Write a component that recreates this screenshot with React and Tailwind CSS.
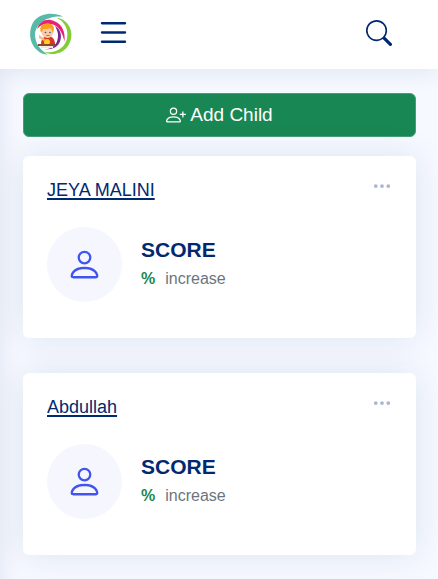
import { BsList, BsPerson, BsPersonPlus, BsSearch, BsThreeDots } from "react-icons/bs";

const children = [
  { id: 1, name: "JEYA MALINI" },
  { id: 2, name: "Abdullah" },
];

function Logo() {
  return (
    <svg viewBox="0 0 42 42" className="size-[42px]" role="img" aria-label="Home">
      <path d="M33 3.500C24-1 11 -.5 4 8C-2 17-1 30 7 37c3 3 6.500 4.500 11 4.800C10 37 5 30 5 21.500C5.500 11 16 2.500 33 3.500Z" fill="#57b9a8" />
      <path d="M27 5c5 2.500 9 7 10 12.500c1.500 9-2 16-9 19.500c-5 2.500-11 3-16 1c9 5.500 19 3 24.500-3c6-7 6.500-17 1.500-23.500C35 7.500 31 5 27 5Z" fill="#84cc37" />
      <path d="M7 16C10 7 18 5 25 8.500c7 3 10.500 10 9.500 20C32.500 20 29 13.500 23 11.500c-6-2-12-.5-16 4.500Z" fill="#ea1f78" />
      <path d="M25 13c5 3 7 8 5.500 14c-1.500 6-7 10-16.500 9.500c7-.5 11-3 13-8c2-6 1-10-2-15.500Z" fill="#7b278b" />
      <path d="M11 31c0-5 3-8 7-8s7 3 7 8Z" fill="#d9362b" />
      <path d="m9 22 6 4-1 2-5-3Z" fill="#f5b68d" />
      <circle cx="17.500" cy="19" r="6" fill="#fbc9a4" />
      <path d="M11 19.500C8.500 13 13 10 18 10.500c5 0 7.500 4 5 9c-1-2.500-2-3.500-3-4.500c-2 1-5 1-7 1c0 1-.5 2-2 3.500Z" fill="#f8a019" />
      <circle cx="15.500" cy="19.500" r=".8" fill="#315a86" />
      <circle cx="20" cy="19.500" r=".8" fill="#315a86" />
      <path d="M16.500 22.500h3" stroke="#b64a3c" strokeWidth=".8" />
      <circle cx="17" cy="29" r="3" fill="#ffd21c" />
      <path d="M8 31h18v2H8Z" fill="#8c4a2b" />
      <path d="M11 33h12v2H11Z" fill="#f3e8e0" />
    </svg>
  );
}

function Header() {
  return (
    <header className="relative z-10 flex h-[69px] items-center bg-white pl-[30px] pr-[46px] shadow-[0_2px_24px_rgba(1,41,112,0.1)]">
      <a href="#home" className="mb-px">
        <Logo />
      </a>
      <button type="button" aria-label="Toggle menu" className="ml-[23px] mb-1">
        <BsList className="size-[37px]" />
      </button>
      <button type="button" aria-label="Search" className="ml-auto mb-1">
        <BsSearch className="size-[26px]" />
      </button>
    </header>
  );
}

function ChildCard({ name }) {
  return (
    <article className="rounded-md bg-white px-6 pt-5 pb-9 shadow-[0_0_35px_rgba(1,41,112,0.1)]">
      <div className="flex items-start justify-between">
        <a href="#child" className="text-lg leading-7 underline decoration-2 underline-offset-2">
          {name}
        </a>
        <button type="button" aria-label={`Options for ${name}`} className="text-[#aab7cf]">
          <BsThreeDots className="size-5" />
        </button>
      </div>
      <div className="mt-[23px] flex items-center">
        <div className="flex size-[75px] shrink-0 items-center justify-center rounded-full bg-[#f6f6fe] text-[#4154f1]">
          <BsPerson className="size-[37px]" />
        </div>
        <div className="pb-0.5 pl-[19px]">
          <h2 className="text-[21px] leading-7 font-bold">SCORE</h2>
          <p className="flex gap-[10px] pt-[3px] text-base leading-6">
            <span className="font-bold text-[#198754]">%</span>
            <span className="text-[#6c757d]">increase</span>
          </p>
        </div>
      </div>
    </article>
  );
}

export default function App() {
  return (
    <div className="min-h-screen bg-[#f6f9ff] font-['Liberation_Sans',Arial,sans-serif] text-[#012970]">
      <Header />
      <main className="min-h-[510px] overflow-hidden pr-[22px] pl-[23px] pt-6 pb-6 shadow-[inset_24px_0_24px_-24px_rgba(1,41,112,0.1)]">
        <button
          type="button"
          className="flex h-11 w-full items-center justify-center gap-1 rounded-md border border-[#469f76] bg-[#198754] text-[19px] text-white"
        >
          <BsPersonPlus className="size-5" />
          Add Child
        </button>
        <div className="mt-[19px] flex flex-col gap-[35px]">
          {children.map((child) => (
            <ChildCard key={child.id} name={child.name} />
          ))}
        </div>
      </main>
    </div>
  );
}
